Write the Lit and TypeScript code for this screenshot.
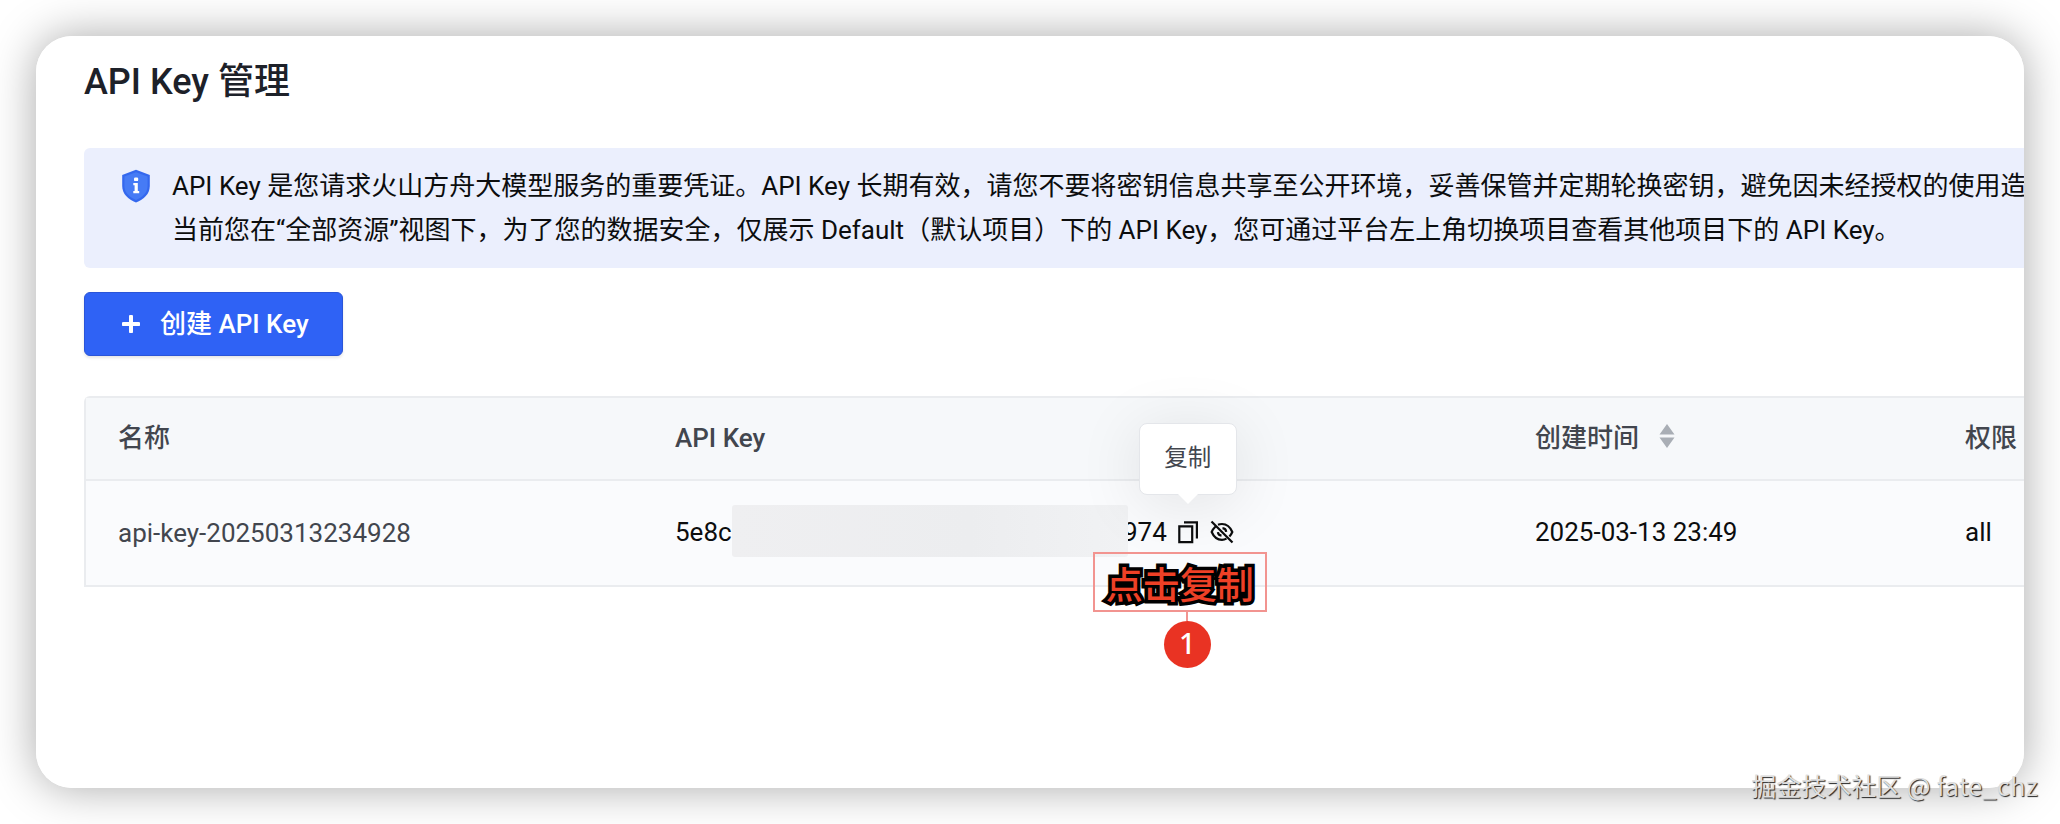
import { LitElement, html, css } from "lit";
import { customElement, property } from "lit/decorators.js";

interface ApiKeyRow {
  name: string;
  keyStart: string;
  keyEnd: string;
  createdAt: string;
  scope: string;
}

const ROWS: ApiKeyRow[] = [
  {
    name: "api-key-20250313234928",
    keyStart: "5e8c",
    keyEnd: "974",
    createdAt: "2025-03-13 23:49",
    scope: "all",
  },
];

@customElement("notice-banner")
class NoticeBanner extends LitElement {
  static styles = css`
    :host {
      display: flex;
      box-sizing: border-box;
      height: 120px;
      padding: 16px 0 0 37px;
      border-radius: 6px 0 0 6px;
      background: #ebeffd;
      color: #0c0d0e;
      font-size: 26px;
      line-height: 44px;
      white-space: nowrap;
    }
    .shield {
      flex: none;
      width: 30px;
      height: 34px;
      margin: 5px 21px 0 0;
    }
    .line {
      display: block;
    }
  `;

  render() {
    return html`
      <svg class="shield" viewBox="0 0 30 34">
        <path d="M15 .8 28.800 6v11c0 8-6 13.300-13.800 16.400C7.200 30.300 1.200 25 1.200 17V6z" fill="#3468ee" />
        <path d="M15 3.200 26.600 7.600V17c0 6.600-4.800 11-11.600 13.900C8.200 28 3.400 23.600 3.400 17V7.600z" fill="#467bf5" />
        <rect x="13" y="8.500" width="4.200" height="3.600" rx="1.200" fill="#fff" />
        <path d="M12.300 14h4.500v8h1.400v2.200h-5.900V22h1.300v-5.800h-1.300z" fill="#fff" />
      </svg>
      <div>
        <span class="line"
          >API Key 是您请求火山方舟大模型服务的重要凭证。API Key 长期有效，请您不要将密钥信息共享至公开环境，妥善保管并定期轮换密钥，避免因未经授权的使用造</span
        >
        <span class="line"
          >当前您在“全部资源”视图下，为了您的数据安全，仅展示 Default（默认项目）下的 API Key，您可通过平台左上角切换项目查看其他项目下的 API Key。</span
        >
      </div>
    `;
  }
}

@customElement("step-note")
class StepNote extends LitElement {
  @property({ type: String }) label = "";
  @property({ type: Number }) step = 1;

  static styles = css`
    :host {
      display: flex;
      flex-direction: column;
      align-items: center;
      width: 174px;
    }
    .box {
      box-sizing: border-box;
      width: 174px;
      height: 60px;
      border: 2px solid #f29490;
      text-align: center;
      font: 500 37px/58px "Noto Sans CJK SC", sans-serif;
      color: #ee4026;
      -webkit-text-stroke: 7px #000;
      stroke-linejoin: round;
      paint-order: stroke fill;
      white-space: nowrap;
    }
    .line {
      width: 2px;
      height: 9px;
      margin-left: 15px;
      background: #f29490;
    }
    .step {
      width: 47px;
      height: 47px;
      margin-left: 15px;
      border-radius: 50%;
      background: #e93323;
      color: #fff;
      text-align: center;
      font: 500 29px/43px "Noto Sans", sans-serif;
    }
  `;

  render() {
    return html`
      <div class="box">${this.label}</div>
      <div class="line"></div>
      <div class="step">${this.step}</div>
    `;
  }
}

@customElement("key-cell")
class KeyCell extends LitElement {
  @property({ type: String }) start = "";
  @property({ type: String }) end = "";

  static styles = css`
    :host {
      display: flex;
      align-items: center;
      height: 52px;
    }
    .start {
      width: 57px;
    }
    .mask {
      position: relative;
      z-index: 1;
      width: 396px;
      height: 52px;
      margin-bottom: 2px;
      border-radius: 3px;
      background: linear-gradient(90deg, #efeff1, #ecedef 60%, #f1f2f4);
    }
    .end {
      margin-left: -5px;
    }
    svg {
      display: block;
      width: 24px;
      height: 24px;
      fill: none;
      stroke: #0c0d0e;
      stroke-width: 2.2;
    }
    .copy {
      position: relative;
      margin-left: 9px;
    }
    .eye {
      margin-left: 10px;
    }
    .tooltip {
      position: absolute;
      z-index: 2;
      left: -37px;
      bottom: 49px;
      box-sizing: border-box;
      width: 98px;
      height: 72px;
      border: 1px solid #e4e6ea;
      border-radius: 8px;
      background: #fff;
      box-shadow: 0 8px 64px rgba(0, 0, 0, 0.1);
      color: #42464e;
      font-size: 23.500px;
      line-height: 69px;
      text-align: center;
    }
    .tooltip::after {
      content: "";
      position: absolute;
      top: 70px;
      left: 38px;
      border: 10px solid transparent;
      border-top-color: #fff;
      border-bottom: 0;
    }
    .note {
      position: absolute;
      z-index: 3;
      left: -83px;
      top: 32px;
    }
  `;

  render() {
    return html`
      <span class="start">${this.start}</span>
      <span class="mask"></span>
      <span class="end">${this.end}</span>
      <div class="copy">
        <svg viewBox="0 0 24 24">
          <path d="M3.300 6.300h12.900v15.900H3.300zM8 2.300h12.900v16.200" />
        </svg>
        <div class="tooltip">复制</div>
        <step-note class="note" label="点击复制" step="1"></step-note>
      </div>
      <svg class="eye" viewBox="0 0 24 24">
        <path
          d="M8 4.700C9.200 4.200 10.500 4 12 4c5.500 0 8.700 4.200 10.300 8-.700 1.700-1.700 3.200-2.900 4.500M16.500 18.600c-1.300.700-2.800 1.200-4.500 1.200-5.500 0-8.700-4-10.300-7.800.8-1.900 2-3.700 3.600-5.200M12.500 8.200c2.100.2 3.500 1.700 3.700 3.600M11.500 15.700c-2-.2-3.400-1.600-3.600-3.500M1.500 1.500l21 21"
        />
      </svg>
    `;
  }
}

@customElement("app-root")
class AppRoot extends LitElement {
  @property({ attribute: false }) rows = ROWS;

  static styles = css`
    :host {
      display: block;
      position: relative;
      box-sizing: border-box;
      width: 2060px;
      height: 824px;
      padding: 36px;
      overflow: hidden;
      background: #fff;
      font-family: Roboto, "Noto Sans CJK SC", sans-serif;
      font-size: 26px;
      line-height: 30px;
      color: #0c0d0e;
    }
    .card {
      box-sizing: border-box;
      height: 752px;
      padding: 21px 0 0 48px;
      overflow: hidden;
      border-radius: 36px;
      background: #fff;
    }
    .shadow {
      border-radius: 36px;
      box-shadow: 0 0 46px rgba(0, 0, 0, 0.34);
    }
    h1 {
      margin: 0 0 41px;
      font-size: 36px;
      line-height: 50px;
      font-weight: 500;
      color: #1d2129;
    }
    .create {
      display: flex;
      align-items: center;
      box-sizing: border-box;
      width: 259px;
      height: 64px;
      margin: 24px 0 40px;
      padding: 0 0 0 37px;
      border: 1px solid #2a55d8;
      border-radius: 6px;
      background: #2f62f5;
      box-shadow: 0 2px 3px rgba(0, 0, 0, 0.1);
      color: #fff;
      font: inherit;
      font-weight: 500;
      white-space: nowrap;
    }
    .create svg {
      width: 18px;
      height: 18px;
      margin-right: 20px;
    }
    .table {
      border: 2px solid #eaecef;
      border-right: 0;
      border-radius: 6px 0 0 0;
    }
    .row {
      display: grid;
      grid-template-columns: 557px 860px 430px 1fr;
      align-items: center;
      box-sizing: border-box;
      height: 104px;
      padding: 0 0 2px 32px;
      background: #fafbfd;
      white-space: nowrap;
    }
    .head {
      height: 83px;
      border-bottom: 2px solid #eaecef;
      background: #f6f8fa;
      color: #42464e;
      font-weight: 500;
    }
    .name {
      padding-top: 2px;
      color: #42464e;
    }
    .sortable {
      display: flex;
      align-items: center;
    }
    .sortable svg {
      width: 16px;
      height: 32px;
      margin: -3px 0 0 20px;
      fill: #a9aeb5;
    }
    .watermark {
      position: absolute;
      right: 22px;
      bottom: 21px;
      font: 400 25px/36px "Noto Sans CJK SC", sans-serif;
      color: #dedede;
      text-shadow: 1px 1px 1px #222;
    }
    .author {
      letter-spacing: 0.400px;
    }
  `;

  render() {
    return html`
      <div class="shadow">
        <main class="card">
          <h1>API Key 管理</h1>
          <notice-banner></notice-banner>
          <button class="create">
            <svg viewBox="0 0 18 18"><path d="M9 1.500v15M1.500 9h15" stroke="#fff" stroke-width="4" stroke-linecap="round" /></svg>
            <span>创建 API Key</span>
          </button>
          <div class="table">
            <div class="row head">
              <span>名称</span>
              <span>API Key</span>
              <span class="sortable">
                创建时间
                <svg viewBox="0 0 16 26">
                  <path d="M8 1l7.500 10.500H.5zM8 25 .5 14.500h15z" />
                </svg>
              </span>
              <span>权限</span>
            </div>
            ${this.rows.map(
              (row) => html`
                <div class="row">
                  <span class="name">${row.name}</span>
                  <key-cell start=${row.keyStart} end=${row.keyEnd}></key-cell>
                  <span>${row.createdAt}</span>
                  <span>${row.scope}</span>
                </div>
              `
            )}
          </div>
        </main>
      </div>
      <div class="watermark">掘金技术社区 <span class="author">@ fate_chz</span></div>
    `;
  }
}
